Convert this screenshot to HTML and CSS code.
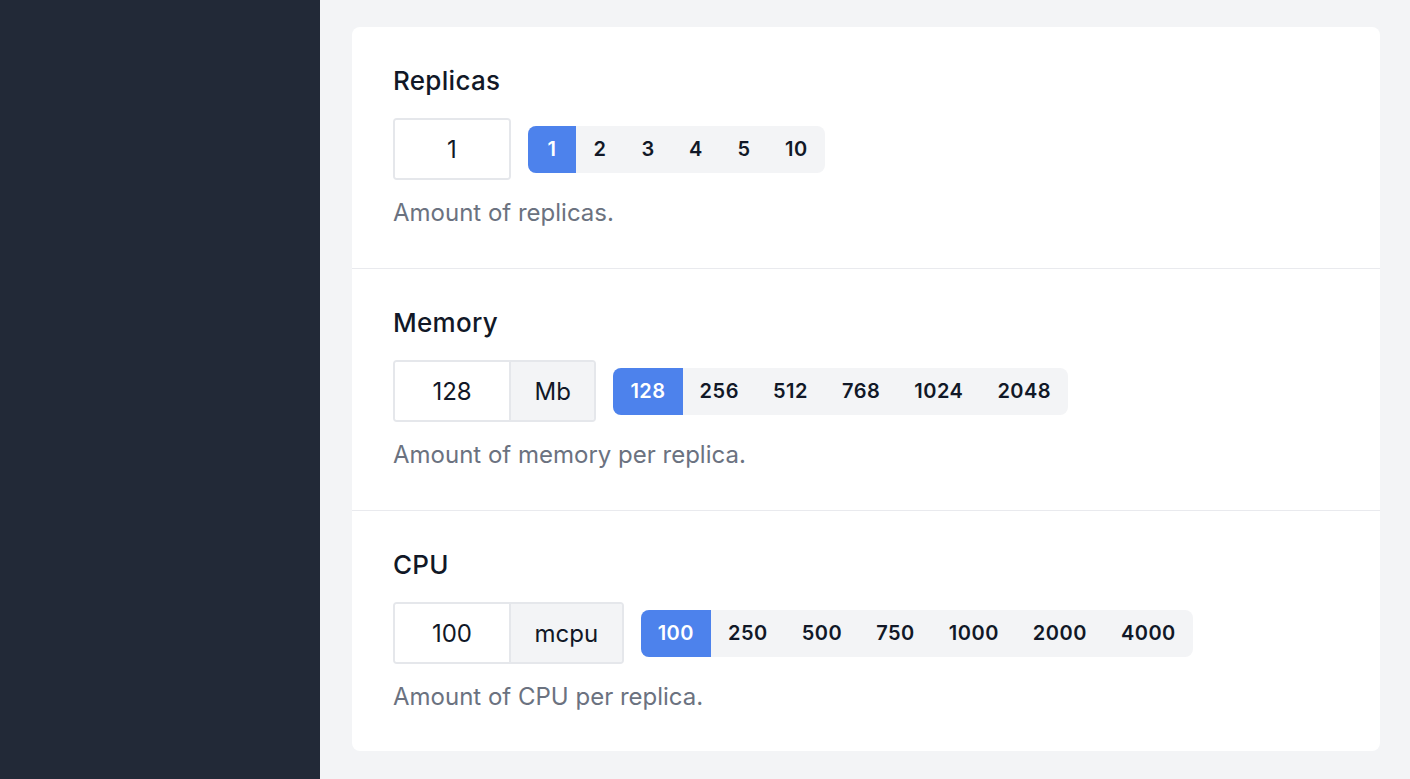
FILE: index.html
```html
<!DOCTYPE html>
<html>
<head>
<meta charset="utf-8">
<link rel="stylesheet" href="styles.css">
</head>
<body>
<div class="layout">
  <aside class="sidebar"></aside>
  <main class="main">
    <div class="card">
      <section class="field">
        <h2 class="field-title">Replicas</h2>
        <div class="controls">
          <div class="input-group">
            <div class="input">1</div>
          </div>
          <div class="segmented">
            <button class="seg active">1</button>
            <button class="seg">2</button>
            <button class="seg">3</button>
            <button class="seg">4</button>
            <button class="seg">5</button>
            <button class="seg">10</button>
          </div>
        </div>
        <p class="help">Amount of replicas.</p>
      </section>
      <section class="field">
        <h2 class="field-title">Memory</h2>
        <div class="controls">
          <div class="input-group">
            <div class="input">128</div>
            <div class="addon">Mb</div>
          </div>
          <div class="segmented">
            <button class="seg active">128</button>
            <button class="seg">256</button>
            <button class="seg">512</button>
            <button class="seg">768</button>
            <button class="seg">1024</button>
            <button class="seg">2048</button>
          </div>
        </div>
        <p class="help">Amount of memory per replica.</p>
      </section>
      <section class="field">
        <h2 class="field-title">CPU</h2>
        <div class="controls">
          <div class="input-group">
            <div class="input">100</div>
            <div class="addon">mcpu</div>
          </div>
          <div class="segmented">
            <button class="seg active">100</button>
            <button class="seg">250</button>
            <button class="seg">500</button>
            <button class="seg">750</button>
            <button class="seg">1000</button>
            <button class="seg">2000</button>
            <button class="seg">4000</button>
          </div>
        </div>
        <p class="help">Amount of CPU per replica.</p>
      </section>
    </div>
  </main>
</div>
</body>
</html>
```
FILE: styles.css
```css
* { box-sizing: border-box; }
html, body { margin: 0; padding: 0; height: 100%; }
body {
  font-family: Inter, "Noto Sans", "Liberation Sans", sans-serif;
  color: #111827;
  background: #f3f4f6;
}
.layout {
  display: flex;
  height: 779px;
  overflow: hidden;
}
.sidebar {
  width: 320px;
  flex: 0 0 320px;
  background: #222937;
}
.main {
  flex: 1;
  background: #f3f4f6;
  padding: 27px 30px 29px 32px;
}
.card {
  background: #ffffff;
  border-radius: 8px;
  overflow: hidden;
}
.field {
  padding: 38px 40px 39px 41px;
  border-top: 1px solid #e9eaee;
}
.field:first-child { border-top: none; }
.field:last-child { padding-bottom: 38px; }
.field-title {
  margin: 0 0 21px;
  font-size: 26px;
  line-height: 32px;
  font-weight: 500;
  letter-spacing: 0.3px;
  color: #111827;
}
.controls {
  display: flex;
  align-items: center;
  gap: 17px;
}
.input-group {
  display: flex;
  height: 62px;
  border: 2px solid #e5e7eb;
  border-radius: 4px;
  overflow: hidden;
}
.input {
  width: 114px;
  display: flex;
  align-items: center;
  justify-content: center;
  font-size: 24px;
  color: #111827;
  background: #fff;
}
.addon {
  display: flex;
  align-items: center;
  padding: 0 23.5px;
  font-size: 24px;
  color: #111827;
  background: #f3f4f6;
  border-left: 2px solid #e5e7eb;
}
.segmented {
  display: flex;
  height: 47px;
  background: #f3f4f6;
  border-radius: 8px;
  overflow: hidden;
}
.seg {
  font-family: inherit;
  border: none;
  background: transparent;
  min-width: 48px;
  padding: 0 17px;
  font-size: 20px;
  font-weight: 600;
  letter-spacing: 0.5px;
  color: #111827;
  cursor: pointer;
}
.seg.active {
  background: #4d82ec;
  color: #ffffff;
}
.help {
  margin: 17px 0 0;
  font-size: 24px;
  line-height: 32px;
  color: #6b7280;
}
```
